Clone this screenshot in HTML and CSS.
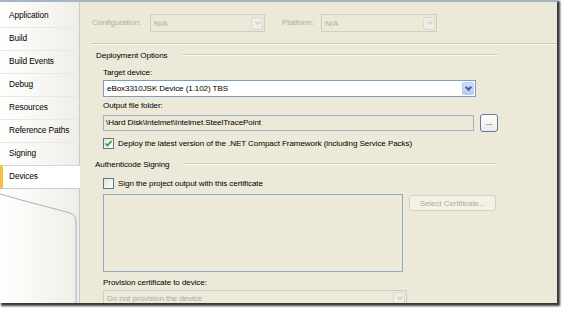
FILE: index.html
```html
<!DOCTYPE html>
<html lang="en">
<head>
    <meta charset="UTF-8">
    <title>Devices - Project Properties</title>
    <link rel="stylesheet" href="styles.css">
</head>
<body>
    <div class="window">
        <div class="sidebar">
            <div class="tab">Application</div>
            <div class="tab">Build</div>
            <div class="tab">Build Events</div>
            <div class="tab">Debug</div>
            <div class="tab">Resources</div>
            <div class="tab">Reference Paths</div>
            <div class="tab">Signing</div>
            <div class="tab selected">Devices</div>
            <div class="tail">
                <svg width="79" height="130" viewBox="0 0 79 130">
                    <path d="M0 5 C 20 11, 45 17, 70 24 Q 76 26 76 32 L 76 130" fill="none" stroke="#9fb3c7" stroke-width="1"/>
                </svg>
            </div>
        </div>

        <div class="content">
            <div class="toprow">
                <span class="label disabled cfg-label">Configuration:</span>
                <div class="combo off w115"><span>N/A</span><i class="arrow"></i></div>
                <span class="label disabled plat-label">Platform:</span>
                <div class="combo off w116"><span>N/A</span><i class="arrow"></i></div>
            </div>
            <div class="sep"></div>

            <div class="group">
                <div class="group-head"><span>Deployment Options</span><div class="rule"></div></div>
                <div class="group-body">
                    <div class="label target">Target device:</div>
                    <div class="combo on w373"><span>eBox3310JSK Device (1.102) TBS</span><i class="arrow"></i></div>

                    <div class="label folder">Output file folder:</div>
                    <div class="field-row">
                        <div class="textbox w373">\Hard Disk\Intelmet\Intelmet.SteelTracePoint</div>
                        <button class="btn dots" type="button">...</button>
                    </div>

                    <div class="check-row deploy">
                        <span class="checkbox checked">
                            <svg width="9" height="9" viewBox="0 0 9 9"><path d="M1.5 4.5 L3.5 6.5 L7.5 2" fill="none" stroke="#21a121" stroke-width="1.6"/></svg>
                        </span>
                        <span>Deploy the latest version of the .NET Compact Framework (including Service Packs)</span>
                    </div>
                </div>
            </div>

            <div class="group auth">
                <div class="group-head"><span>Authenticode Signing</span><div class="rule"></div></div>
                <div class="group-body">
                    <div class="check-row sign">
                        <span class="checkbox"></span>
                        <span>Sign the project output with this certificate</span>
                    </div>
                    <div class="cert-row">
                        <div class="cert-box"></div>
                        <button class="btn off select" type="button">Select Certificate...</button>
                    </div>
                    <div class="label provision">Provision certificate to device:</div>
                    <div class="combo off w304"><span>Do not provision the device</span><i class="arrow"></i></div>
                </div>
            </div>
        </div>
    </div>
</body>
</html>
```

FILE: styles.css
```css
body {
    margin: 0;
    width: 562px;
    height: 309px;
    overflow: hidden;
    background: #ffffff;
    font-family: "Liberation Sans", Arial, sans-serif;
    font-size: 8.1px;
    letter-spacing: -0.1px;
    color: #000000;
}
.window {
    display: flex;
    width: 557px;
    height: 301px;
    border-top: 2px solid #a6b5c5;
    overflow: hidden;
    box-shadow: 2px 2px 2px 1px rgba(0, 0, 0, 0.78);
}

/* left tab list */
.sidebar {
    display: flex;
    flex-direction: column;
    width: 79px;
    padding-top: 3px;
    border-right: 1px solid #c5cacf;
    background: linear-gradient(90deg, #ffffff 0%, #f6f5f0 60%, #eeede6 100%);
}
.tab {
    height: 22px;
    line-height: 21px;
    padding-left: 9px;
    border-bottom: 1px solid #e9e8e2;
    white-space: nowrap;
    font-size: 8.3px;
}
.tab.selected {
    background: #ffffff;
    border-top: 1px solid #d2d7dc;
    border-bottom: 1px solid #c9cfd5;
    border-left: 3px solid #f6bf45;
    padding-left: 6px;
    margin-top: -1px;
    margin-right: -1px;
}
.tail {
    flex: 1;
    overflow: hidden;
}
.tail svg {
    display: block;
}

/* right panel */
.content {
    flex: 1;
    background: #ece9d8;
    padding: 12px 0 0 12px;
}
.label {
    line-height: 12px;
    white-space: nowrap;
}
.disabled {
    color: #b0ad9e;
}
.toprow {
    display: flex;
    align-items: center;
    height: 18px;
}
.cfg-label {
    width: 58px;
}
.plat-label {
    width: 39px;
    margin-left: 17px;
}
.sep {
    margin: 11px 0 0 -1px;
    border-top: 1px solid #cbc8b8;
    border-bottom: 1px solid #f8f7f0;
}

.group {
    width: 402px;
    margin: 4px 0 0 4px;
}
.group.auth {
    margin-top: 9px;
    margin-left: 3px;
    width: 401px;
}
.group-head {
    display: flex;
    align-items: center;
    height: 12px;
    white-space: nowrap;
}
.group-head .rule {
    flex: 1;
    margin-left: 14px;
    border-top: 1px solid #d0cdbd;
    border-bottom: 1px solid #faf9f3;
}
.group-body {
    padding-left: 7px;
}
.auth .group-body {
    padding-left: 8px;
}
.target {
    margin-top: 6px;
}
.folder {
    margin-top: 3px;
}
.provision {
    margin-top: 5px;
    line-height: 12px;
}

/* combo boxes */
.combo {
    display: flex;
    align-items: center;
    justify-content: space-between;
    box-sizing: border-box;
    height: 17px;
    margin-top: 1px;
    padding: 0 1px 0 3px;
    border: 1px solid #7f9db9;
    background: #ffffff;
}
.toprow .combo {
    margin-top: 0;
    height: 18px;
}
.combo.off {
    border-color: #d1cebf;
    background: #ece9d8;
    color: #b0ad9e;
}
.w115 { width: 115px; }
.w116 { width: 116px; }
.w304 { width: 304px; }
.w373 { width: 373px; }
.arrow {
    position: relative;
    width: 12px;
    height: 13px;
    box-sizing: border-box;
    border: 1px solid #b8c9f3;
    border-radius: 2px;
    background: linear-gradient(#d2defc, #b6c9f7);
}
.arrow::after {
    content: "";
    position: absolute;
    left: 3px;
    top: 2px;
    width: 3px;
    height: 3px;
    border-right: 2px solid #4d6185;
    border-bottom: 2px solid #4d6185;
    transform: rotate(45deg);
}
.off .arrow {
    border-color: #dcd9cc;
    background: #f0eee4;
}
.off .arrow::after {
    border-color: #c9c7ba;
    border-width: 1px;
    left: 4px;
}

.field-row {
    display: flex;
    align-items: center;
    height: 18px;
    margin-top: 2px;
}
.textbox {
    box-sizing: border-box;
    height: 16px;
    line-height: 14px;
    padding-left: 2px;
    border: 1px solid #9fb2c7;
    background: #ece9d8;
    white-space: nowrap;
}
.btn {
    box-sizing: border-box;
    height: 18px;
    margin: 0 0 0 6px;
    padding: 0;
    border: 1px solid #5d7ba6;
    border-radius: 3px;
    background: linear-gradient(#ffffff, #eceae2);
    font-family: inherit;
    font-size: inherit;
    letter-spacing: inherit;
    color: #000000;
}
.dots {
    width: 18px;
    line-height: 12px;
}
.btn.off {
    border-color: #d4d1c3;
    background: #f3f1e8;
    color: #b0ad9e;
}
.select {
    width: 88px;
    height: 16px;
    margin-top: 1px;
    margin-left: 6px;
    align-self: flex-start;
}

.check-row {
    display: flex;
    align-items: center;
    height: 12px;
    gap: 4px;
    white-space: nowrap;
}
.deploy {
    margin-top: 5px;
}
.sign {
    margin-top: 7px;
}
.checkbox {
    display: flex;
    align-items: center;
    justify-content: center;
    box-sizing: border-box;
    width: 11px;
    height: 11px;
    border: 1px solid #56799b;
    background: linear-gradient(135deg, #e2e1d9, #ffffff);
}

.cert-row {
    display: flex;
    margin-top: 5px;
}
.cert-box {
    box-sizing: border-box;
    width: 304px;
    height: 78px;
    border: 1px solid #8fa9c2;
}
```
